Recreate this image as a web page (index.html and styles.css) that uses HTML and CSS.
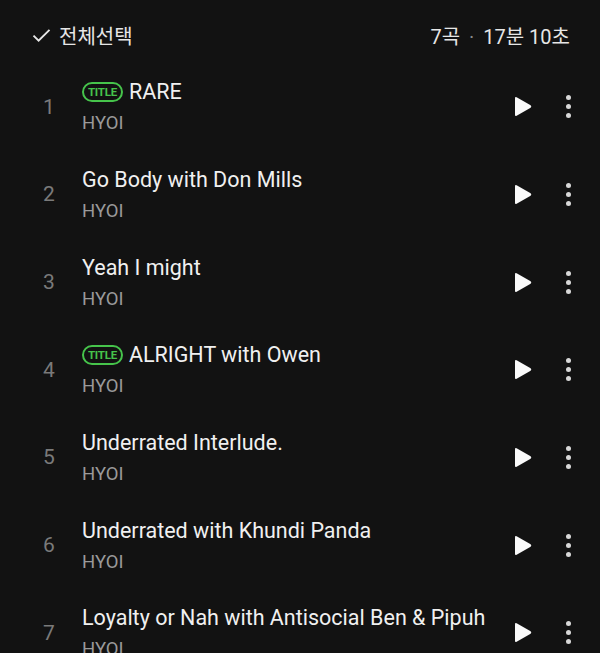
FILE: index.html
```html
<!DOCTYPE html>
<html lang="ko">
<head>
<meta charset="utf-8">
<link rel="stylesheet" href="styles.css">
</head>
<body>
<div class="page">
  <header class="top">
    <div class="select-all">
      <svg class="check" width="19" height="15" viewBox="0 0 19 15"><path d="M1.5 7.6 L6.6 12.7 L17.5 1.8" fill="none" stroke="#e6e6e6" stroke-width="1.9"/></svg>
      <span>전체선택</span>
    </div>
    <div class="summary">7곡<span class="dot">·</span>17분 10초</div>
  </header>
  <ul class="list">
    <li class="row"><span class="num">1</span><div class="info"><div class="title"><span class="badge">TITLE</span>RARE</div><div class="artist">HYOI</div></div><svg class="play" width="18" height="21" viewBox="0 0 18 21"><path d="M1 2.2 Q1 0.4 2.6 1.3 L16.6 9.3 Q18 10.5 16.6 11.7 L2.6 19.7 Q1 20.6 1 18.8 Z" fill="#fafafa"/></svg><span class="more"><i></i><i></i><i></i></span></li>
    <li class="row"><span class="num">2</span><div class="info"><div class="title">Go Body with Don Mills</div><div class="artist">HYOI</div></div><svg class="play" width="18" height="21" viewBox="0 0 18 21"><path d="M1 2.2 Q1 0.4 2.6 1.3 L16.6 9.3 Q18 10.5 16.6 11.7 L2.6 19.7 Q1 20.6 1 18.8 Z" fill="#fafafa"/></svg><span class="more"><i></i><i></i><i></i></span></li>
    <li class="row"><span class="num">3</span><div class="info"><div class="title">Yeah I might</div><div class="artist">HYOI</div></div><svg class="play" width="18" height="21" viewBox="0 0 18 21"><path d="M1 2.2 Q1 0.4 2.6 1.3 L16.6 9.3 Q18 10.5 16.6 11.7 L2.6 19.7 Q1 20.6 1 18.8 Z" fill="#fafafa"/></svg><span class="more"><i></i><i></i><i></i></span></li>
    <li class="row"><span class="num">4</span><div class="info"><div class="title"><span class="badge">TITLE</span>ALRIGHT with Owen</div><div class="artist">HYOI</div></div><svg class="play" width="18" height="21" viewBox="0 0 18 21"><path d="M1 2.2 Q1 0.4 2.6 1.3 L16.6 9.3 Q18 10.5 16.6 11.7 L2.6 19.7 Q1 20.6 1 18.8 Z" fill="#fafafa"/></svg><span class="more"><i></i><i></i><i></i></span></li>
    <li class="row"><span class="num">5</span><div class="info"><div class="title">Underrated Interlude.</div><div class="artist">HYOI</div></div><svg class="play" width="18" height="21" viewBox="0 0 18 21"><path d="M1 2.2 Q1 0.4 2.6 1.3 L16.6 9.3 Q18 10.5 16.6 11.7 L2.6 19.7 Q1 20.6 1 18.8 Z" fill="#fafafa"/></svg><span class="more"><i></i><i></i><i></i></span></li>
    <li class="row"><span class="num">6</span><div class="info"><div class="title">Underrated with Khundi Panda</div><div class="artist">HYOI</div></div><svg class="play" width="18" height="21" viewBox="0 0 18 21"><path d="M1 2.2 Q1 0.4 2.6 1.3 L16.6 9.3 Q18 10.5 16.6 11.7 L2.6 19.7 Q1 20.6 1 18.8 Z" fill="#fafafa"/></svg><span class="more"><i></i><i></i><i></i></span></li>
    <li class="row"><span class="num">7</span><div class="info"><div class="title">Loyalty or Nah with Antisocial Ben &amp; Pipuh</div><div class="artist">HYOI</div></div><svg class="play" width="18" height="21" viewBox="0 0 18 21"><path d="M1 2.2 Q1 0.4 2.6 1.3 L16.6 9.3 Q18 10.5 16.6 11.7 L2.6 19.7 Q1 20.6 1 18.8 Z" fill="#fafafa"/></svg><span class="more"><i></i><i></i><i></i></span></li>
  </ul>
</div>
</body>
</html>
```
FILE: styles.css
```css
* { box-sizing: border-box; }
html, body { margin: 0; padding: 0; background: #121212; }
body { font-family: Roboto, "Noto Sans CJK KR", sans-serif; color: #ececec; overflow: hidden; }
.page { width: 600px; height: 653px; overflow: hidden; }
.top { height: 63px; padding: 7px 30px 0 32px; display: flex; align-items: center; justify-content: space-between; }
.select-all { display: flex; align-items: center; gap: 8px; font-size: 20px; color: #e6e6e6; }
.check { display: block; }
.summary { font-size: 20px; color: #e6e6e6; }
.summary .dot { color: #8a8a8a; margin: 0 9px; }
.list { list-style: none; margin: 0; padding: 0; }
.row { height: 87.67px; display: flex; align-items: center; padding: 0 29.5px 0 0; }
.num { width: 82px; padding-left: 16px; text-align: center; font-size: 21px; font-weight: 400; color: #7a7a7a; }
.info { flex: 1; min-width: 0; display: flex; flex-direction: column; gap: 7px; }
.title { font-size: 21.5px; line-height: 26px; color: #f0f0f0; display: flex; align-items: center; white-space: nowrap; }
.artist { font-size: 18.5px; line-height: 22px; color: #9a9a9a; }
.badge { display: inline-flex; align-items: center; justify-content: center; height: 20px; width: 41px; margin-right: 6px; border: 2px solid #46c44b; border-radius: 10px; color: #46c44b; font-size: 11.5px; font-weight: 700; line-height: 1; letter-spacing: -0.2px; }
.play { display: block; flex: none; margin-right: 33.5px; }
.more { display: flex; flex-direction: column; gap: 4px; width: 5px; }
.more i { display: block; width: 5px; height: 5px; border-radius: 50%; background: #d8d8d8; }
```
